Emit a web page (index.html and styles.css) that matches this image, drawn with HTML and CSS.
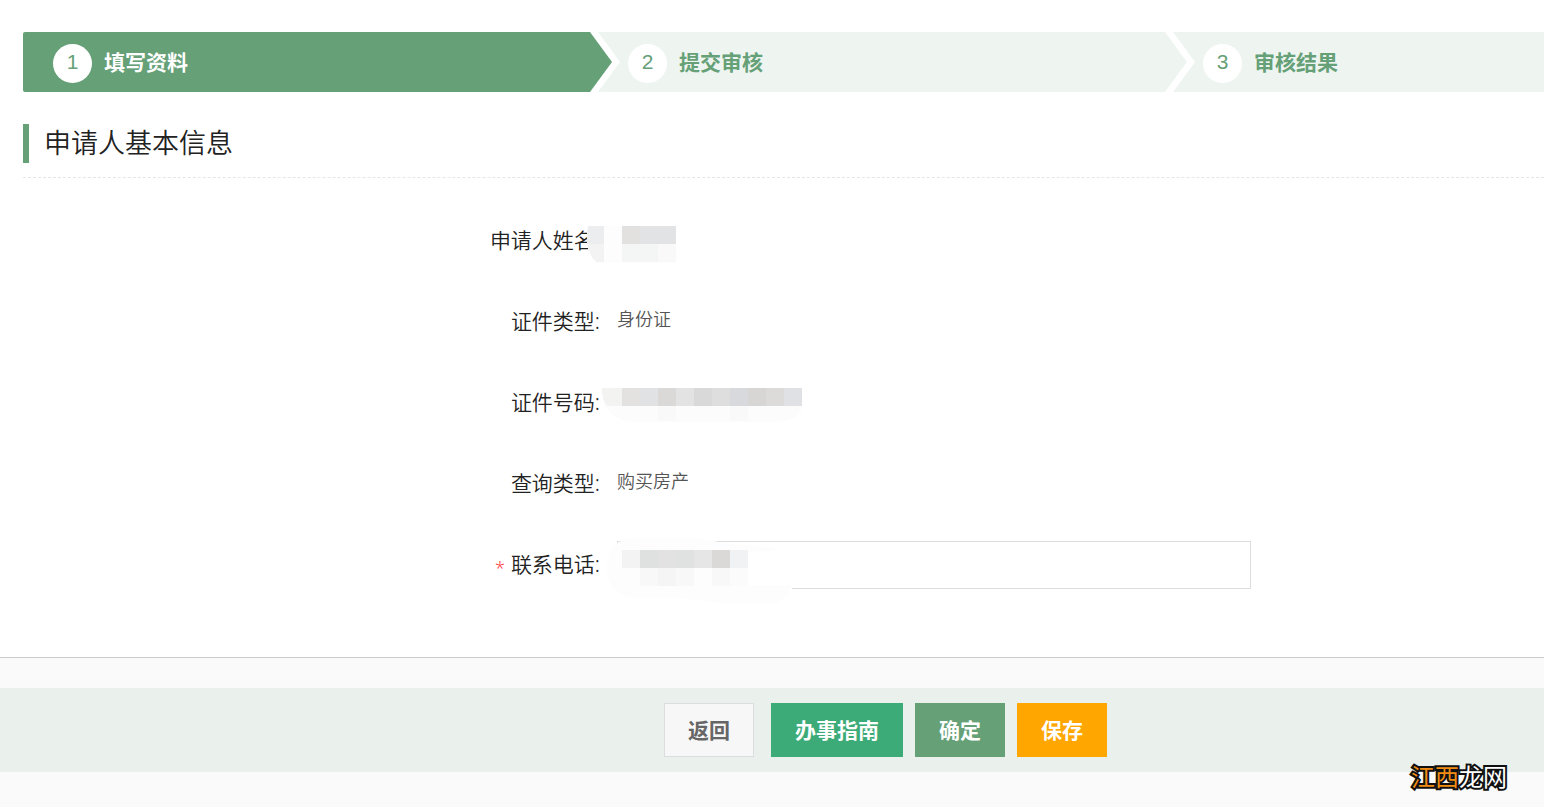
FILE: index.html
```
<!DOCTYPE html>
<html lang="zh-CN">
<head>
<meta charset="utf-8">
<title>申请人基本信息</title>
<link rel="stylesheet" href="styles.css">
</head>
<body>
<main class="content">
  <ol class="steps">
    <li class="step step-active"><span class="step-num">1</span><span class="step-name">填写资料</span></li>
    <li class="step step-notch"><span class="step-num">2</span><span class="step-name">提交审核</span></li>
    <li class="step step-last"><span class="step-num">3</span><span class="step-name">审核结果</span></li>
  </ol>
  <h1 class="title">申请人基本信息</h1>
  <form class="form" id="apply">
    <div class="row">
      <span class="label">申请人姓名:</span>
      <div class="field">
        <svg class="mask mask-name" width="89" height="37" viewBox="0 0 89 37" shape-rendering="crispEdges" aria-hidden="true">
          <path fill="#fdfdfd" d="M0 0h89v37H9Q0 29 0 12z"/>
          <path fill="#ecedef" d="M1 0h16v18H0V8z"/><path fill="#f3f3f4" d="M0 18h17v18H9Q2 29 0 18z"/>
          <path fill="#e2e1e0" d="M35 0h18v18H35z"/><path fill="#e2e3e5" d="M53 0h36v18H53z"/>
          <path fill="#f4f5f5" d="M35 18h36v18H35z"/><path fill="#f9f9f9" d="M71 18h18v18H71z"/>
        </svg>
      </div>
    </div>
    <div class="row"><span class="label">证件类型:</span><div class="field">身份证</div></div>
    <div class="row">
      <span class="label">证件号码:</span>
      <div class="field">
        <svg class="mask mask-id" width="201" height="35" viewBox="0 0 201 35" shape-rendering="crispEdges" aria-hidden="true">
          <path fill="#fcfcfc" d="M3 16h197v8q-10 10-24 10H33Q13 33 4 18z"/>
          <path fill="#f3f3f2" d="M1 0h20v18H6Q1 13 1 0z"/>
          <path fill="#e3e2e0" d="M21 0h18v18H21z"/><path fill="#e1e2e4" d="M39 0h18v18H39z"/>
          <path fill="#dad9d8" d="M57 0h18v18H57z"/><path fill="#e3e3e4" d="M75 0h18v18H75z"/>
          <path fill="#d9d9da" d="M93 0h18v18H93z"/><path fill="#dededf" d="M111 0h18v18h-18z"/>
          <path fill="#d8d9dc" d="M129 0h18v18h-18z"/><path fill="#d8d6d4" d="M147 0h18v18h-18z"/>
          <path fill="#dcdbda" d="M165 0h18v18h-18z"/><path fill="#e0e1e4" d="M183 0h18v18h-18z"/>
          <path fill="#f9f9f9" d="M57 18h18v15H57zM129 18h18v15h-18z"/>
        </svg>
      </div>
    </div>
    <div class="row"><span class="label">查询类型:</span><div class="field">购买房产</div></div>
    <div class="row">
      <label class="label" for="phone"><span class="required">*</span>联系电话:</label>
      <div class="field">
        <input class="input" id="phone" type="tel">
        <svg class="mask mask-phone" width="188" height="68" viewBox="0 0 188 68" aria-hidden="true">
          <path fill="#fff" d="M122 9h10l45 5v34h8v8q-8 8-20 8H90V9z"/>
          <path fill="#fdfdfd" d="M0 32C0 12 9 1 30 1h50c15 0 26 3 41 6 18 1 40 2 51 6l-36 3v32h49q-7 19-24 19h-34c-23 0-38-6-60-6H30C12 61 0 49 0 32z"/>
          <g shape-rendering="crispEdges">
          <path fill="#f3f3f3" d="M15 13h18v18H15z"/><path fill="#dfe0e0" d="M33 13h18v18H33z"/>
          <path fill="#e2e2e2" d="M51 13h18v18H51z"/><path fill="#e0e2e1" d="M69 13h18v18H69z"/>
          <path fill="#e6e6e6" d="M87 13h18v18H87z"/><path fill="#dad9d8" d="M105 13h18v18h-18z"/>
          <path fill="#f1f2f4" d="M123 13h18v18h-18z"/>
          <path fill="#f8f8f8" d="M33 31h18v18H33zM69 31h18v18H69zM105 31h18v18h-18z"/><path fill="#f5f5f5" d="M51 31h18v18H51z"/>
          <path fill="#fbfbfb" d="M123 31h18v18h-18z"/>
          </g>
        </svg>
      </div>
    </div>
  </form>
</main>
<footer class="footer">
  <div class="actions">
    <button class="btn btn-back" type="button">返回</button>
    <button class="btn btn-guide" type="button">办事指南</button>
    <button class="btn btn-ok" type="submit" form="apply">确定</button>
    <button class="btn btn-save" type="button">保存</button>
  </div>
  <div class="watermark"><span class="watermark-accent">江西</span>龙网</div>
</footer>
</body>
</html>
```
FILE: styles.css
```
* { box-sizing: border-box; }

body {
  margin: 0;
  min-height: 100vh;
  display: flex;
  flex-direction: column;
  background: #fafafa;
  color: #222;
  font-family: "Noto Sans", "Noto Sans CJK SC", sans-serif;
}

.content {
  padding: 32px 0 68px 23px;
  background: #fff;
  border-bottom: 1px solid #ccc;
}

.steps {
  display: grid;
  grid-template-columns: 575fr 575fr 371fr;
  margin: 0;
  padding: 0;
  list-style: none;
}

.step {
  display: flex;
  align-items: center;
  gap: 12px;
  width: calc(100% + 14px);
  height: 60px;
  padding-left: 30px;
  background: #eef5f1;
  color: #65a077;
  font-size: 21px;
  line-height: 30px;
}

.step-active {
  background: #65a077;
  color: #fff;
  border-radius: 2px;
  clip-path: polygon(0 0, calc(100% - 22px) 0, 100% 50%, calc(100% - 22px) 100%, 0 100%);
}

.step-notch {
  clip-path: polygon(0 0, calc(100% - 22px) 0, 100% 50%, calc(100% - 22px) 100%, 0 100%, 22px 50%);
}

.step-last {
  width: 100%;
  clip-path: polygon(0 0, 100% 0, 100% 100%, 0 100%, 22px 50%);
}

.step-num {
  width: 39px;
  height: 39px;
  margin-top: 3px;
  border-radius: 50%;
  background: #fff;
  color: #65a077;
  font-family: "Liberation Sans", sans-serif;
  line-height: 36px;
  text-align: center;
}

.step-name { font-weight: 700; }

.title {
  margin: 32px 0 0;
  padding-bottom: 14px;
  border-bottom: 1px dashed #e6e6e6;
  font-size: 27px;
  font-weight: 350;
  line-height: 38px;
  display: flex;
  gap: 15px;
}

.title::before {
  content: "";
  width: 6px;
  height: 39px;
  background: #65a077;
}

.form {
  display: grid;
  gap: 33px;
  padding-top: 39px;
}

.row {
  display: grid;
  grid-template-columns: 577fr 634fr 276fr;
  column-gap: 17px;
}

.label {
  font-size: 21px;
  font-weight: 350;
  line-height: 46px;
  text-align: right;
  white-space: nowrap;
}

.required {
  margin-right: 6px;
  color: #f44;
  font-size: 18px;
  vertical-align: -3px;
  line-height: 1;
}

.field {
  position: relative;
  height: 48px;
  color: #555;
  font-size: 18px;
  font-weight: 350;
  line-height: 42px;
}

.input {
  display: block;
  width: 100%;
  height: 48px;
  padding: 0 16px;
  border: 1px solid #dcdddf;
  background: #fff;
  color: #666;
  font: inherit;
}

.mask { position: absolute; }
.mask-name { left: -30px; top: 9px; }
.mask-id { left: -16px; top: 9px; }
.mask-phone { left: -10px; top: -4px; }

.footer {
  position: relative;
  padding: 30px 0 35px;
}

.actions {
  display: flex;
  justify-content: center;
  gap: 12px;
  padding: 15px 0 15px 227px;
  background: #eaf0ec;
}

.btn {
  height: 54px;
  padding: 0 24px;
  border: 0;
  color: #fff;
  font-family: inherit;
  font-size: 21px;
  font-weight: 700;
  line-height: 30px;
}

.btn-back {
  margin-right: 5px;
  padding: 0 23px;
  border: 1px solid #dcdddf;
  background: #f7f7f7;
  color: #666;
}

.btn-guide { background: #3cab78; }
.btn-ok { background: #65a077; }
.btn-save { background: #ffa600; }

.watermark {
  position: absolute;
  right: 37px;
  bottom: 12px;
  color: #fff;
  font-size: 24px;
  font-weight: 400;
  line-height: 36px;
  -webkit-text-stroke: 4px #111;
  paint-order: stroke fill;
}

.watermark-accent { color: #f08c14; }
```
